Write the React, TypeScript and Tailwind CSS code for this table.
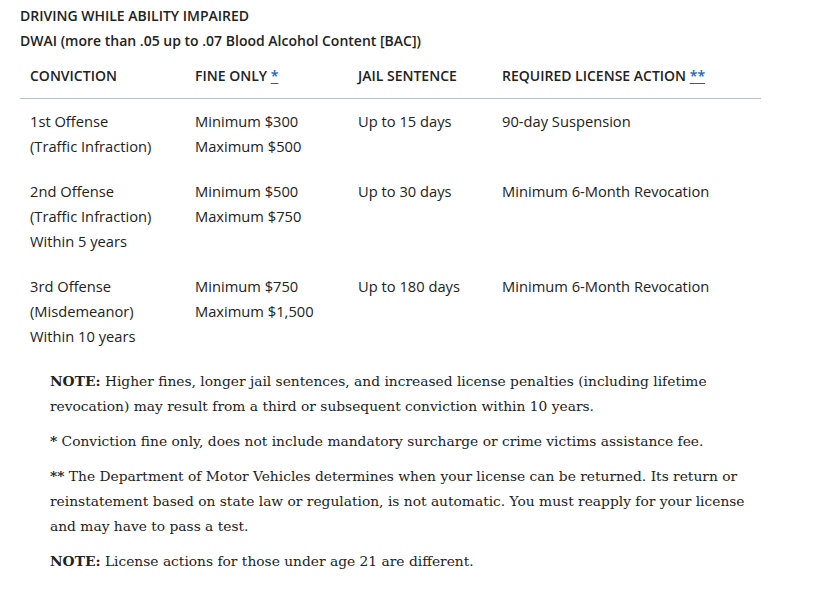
import React from 'react';

const rows = [
  {
    conviction: ['1st Offense', '(Traffic Infraction)'],
    fine: ['Minimum $300', 'Maximum $500'],
    jail: 'Up to 15 days',
    action: '90-day Suspension',
  },
  {
    conviction: ['2nd Offense', '(Traffic Infraction)', 'Within 5 years'],
    fine: ['Minimum $500', 'Maximum $750'],
    jail: 'Up to 30 days',
    action: 'Minimum 6-Month Revocation',
  },
  {
    conviction: ['3rd Offense', '(Misdemeanor)', 'Within 10 years'],
    fine: ['Minimum $750', 'Maximum $1,500'],
    jail: 'Up to 180 days',
    action: 'Minimum 6-Month Revocation',
  },
];

const Star: React.FC<{ n: string }> = ({ n }) => (
  <a href="#" className="text-[#1565c0] underline underline-offset-2">{n}</a>
);

export default function App() {
  return (
    <div className="w-[816px] h-[590px] bg-white text-[#222] overflow-hidden">
      <div className="pl-5 pt-[3px] font-['Open_Sans',sans-serif]">
        <p className="text-[14px] leading-[25px] font-semibold">DRIVING WHILE ABILITY IMPAIRED</p>
        <p className="text-[14px] leading-[25px] font-semibold">DWAI (more than .05 up to .07 Blood Alcohol Content [BAC])</p>

        <table className="w-[741px] border-collapse text-[14.7px] leading-[25px]">
          <thead>
            <tr className="border-b border-[#b9c0c6] text-left text-[14px]">
              <th className="w-[165px] px-[10px] py-[10px] font-semibold">CONVICTION</th>
              <th className="w-[163px] px-[10px] py-[10px] font-semibold">FINE ONLY <Star n="*" /></th>
              <th className="w-[144px] px-[10px] py-[10px] font-semibold">JAIL SENTENCE</th>
              <th className="px-[10px] py-[10px] font-semibold">REQUIRED LICENSE ACTION <Star n="**" /></th>
            </tr>
          </thead>
          <tbody>
            {rows.map((r, i) => (
              <tr key={i} className="align-top">
                <td className="px-[10px] py-[10px]">
                  {r.conviction.map(c => <div key={c}>{c}</div>)}
                </td>
                <td className="px-[10px] py-[10px]">
                  {r.fine.map(f => <div key={f}>{f}</div>)}
                </td>
                <td className="px-[10px] py-[10px]">{r.jail}</td>
                <td className="px-[10px] py-[10px]">{r.action}</td>
              </tr>
            ))}
          </tbody>
        </table>

        <div className="w-[735px] pl-[30px] pt-[10px] font-['DejaVu_Serif',serif] text-[13.8px] leading-[25px] space-y-[10px]">
          <p><b>NOTE:</b> Higher fines, longer jail sentences, and increased license penalties (including lifetime revocation) may result from a third or subsequent conviction within 10 years.</p>
          <p><b>*</b> Conviction fine only, does not include mandatory surcharge or crime victims assistance fee.</p>
          <p><b>**</b> The Department of Motor Vehicles determines when your license can be returned. Its return or reinstatement based on state law or regulation, is not automatic. You must reapply for your license and may have to pass a test.</p>
          <p><b>NOTE:</b> License actions for those under age 21 are different.</p>
        </div>
      </div>
    </div>
  );
}
